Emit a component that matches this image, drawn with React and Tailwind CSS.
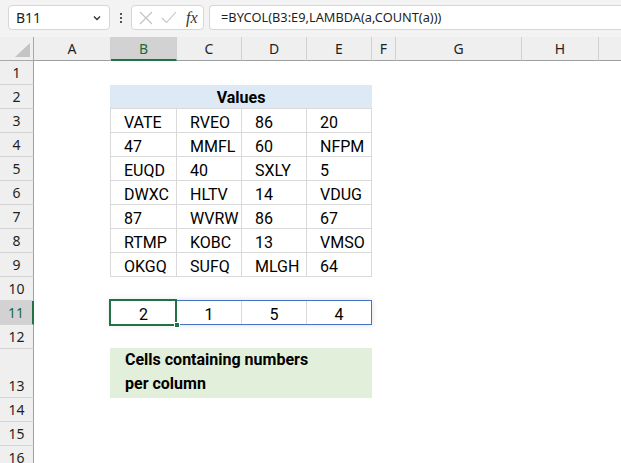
import React from 'react';

const colHeaders = [
  { label: 'A', w: 'w-[77px]' },
  { label: 'B', w: 'w-[66px]', selected: true },
  { label: 'C', w: 'w-[65px]' },
  { label: 'D', w: 'w-[65px]' },
  { label: 'E', w: 'w-[65px]' },
  { label: 'F', w: 'w-[24px]' },
  { label: 'G', w: 'w-[126px]' },
  { label: 'H', w: 'w-[77px]' },
  { label: '', w: 'w-[30px]' },
];

const rows = [
  ['VATE', 'RVEO', '86', '20'],
  ['47', 'MMFL', '60', 'NFPM'],
  ['EUQD', '40', 'SXLY', '5'],
  ['DWXC', 'HLTV', '14', 'VDUG'],
  ['87', 'WVRW', '86', '67'],
  ['RTMP', 'KOBC', '13', 'VMSO'],
  ['OKGQ', 'SUFQ', 'MLGH', '64'],
];

const cellW = ['w-[66px]', 'w-[65px]', 'w-[65px]', 'w-[65px]'];
const results = [2, 1, 5, 4];

function FormulaBar() {
  return (
    <div className="h-[37px] bg-[#f3f3f3] flex items-start pt-[5px] pl-[8px] shrink-0">
      {/* name box */}
      <div className="w-[102px] shrink-0 h-[25px] bg-white border border-[#d6d6d6] rounded-[4px] flex items-center pl-[7px] pr-[8px] text-[14px] text-[#1f1f1f]">
        <span className="flex-1">B11</span>
        <svg width="8" height="6" viewBox="0 0 8 6">
          <path d="M1 1.5 L4 4.5 L7 1.5" fill="none" stroke="#333" strokeWidth="1.4" />
        </svg>
      </div>
      {/* dots */}
      <div className="w-[21px] shrink-0 h-[25px] flex flex-col items-center justify-center gap-[2px]">
        <span className="w-[2px] h-[2px] bg-[#555]" />
        <span className="w-[2px] h-[2px] bg-[#555]" />
        <span className="w-[2px] h-[2px] bg-[#555]" />
      </div>
      {/* cancel / enter / fx */}
      <div className="w-[73px] shrink-0 h-[25px] bg-white border border-[#d6d6d6] rounded-[4px] flex items-center pl-[6px]">
        <svg width="14" height="14" viewBox="0 0 14 14" className="ml-[1px]">
          <path d="M1 1 L13 13 M13 1 L1 13" stroke="#c2c2c2" strokeWidth="1.1" />
        </svg>
        <svg width="16" height="13" viewBox="0 0 16 13" className="ml-[8px]">
          <path d="M1 7 L5.5 11.5 L15 1" fill="none" stroke="#c2c2c2" strokeWidth="1.1" />
        </svg>
        <span className="ml-[9px] italic text-[16px] leading-none text-[#333] font-['Liberation_Serif',serif]">fx</span>
      </div>
      {/* formula input */}
      <div className="ml-[5px] flex-1 h-[25px] bg-white border border-[#d6d6d6] border-r-0 rounded-l-[4px] flex items-center pl-[11px] text-[12.8px] text-[#1f1f1f]">
        =BYCOL(B3:E9,LAMBDA(a,COUNT(a)))
      </div>
    </div>
  );
}

function ColumnHeader() {
  return (
    <div className="flex h-[24px] bg-[#efefef] shrink-0">
      <div className="w-[34px] shrink-0 h-full border-r border-b border-[#a8a8a8] relative">
        <svg width="34" height="24" viewBox="0 0 34 24" className="absolute left-0 top-0">
          <polygon points="30,6 30,20 15,20" fill="#c4c4c4" />
        </svg>
      </div>
      {colHeaders.map((c, i) => (
        <div
          key={i}
          className={`${c.w} shrink-0 h-full flex items-center justify-center text-[14px] border-r border-r-[#d0d0d0] ${
            c.selected
              ? 'bg-[#d2d2d2] text-[#1d6b40] border-b-2 border-b-[#217346]'
              : 'text-[#1f1f1f] border-b border-b-[#a0a0a0]'
          }`}
        >
          {c.label}
        </div>
      ))}
    </div>
  );
}

function RowHeaders() {
  const nums = Array.from({ length: 16 }, (_, i) => i + 1);
  return (
    <div className="w-[34px] shrink-0 bg-[#efefef] flex flex-col">
      {nums.map((n) => (
        <div
          key={n}
          className={`w-[34px] shrink-0 flex items-center justify-center text-[14px] border-b border-b-[#d4d4d4] ${
            n === 13 ? 'h-[49px] pt-[24px]' : 'h-[24px]'
          } ${
            n === 11
              ? 'bg-[#d2d2d2] text-[#1d6b40] border-r-2 border-r-[#217346]'
              : 'text-[#1f1f1f] border-r border-r-[#a0a0a0]'
          }`}
        >
          {n}
        </div>
      ))}
    </div>
  );
}

function Sheet() {
  return (
    <div className="flex-1 grid grid-cols-[77px_66px_65px_65px_65px_24px_126px_77px] grid-rows-[repeat(12,24px)_49px_repeat(3,24px)] bg-white">
      {/* values table */}
      <div className="col-start-2 col-span-4 row-start-2 row-span-8 -ml-px w-[262px] flex flex-col font-['Roboto',sans-serif] text-[16px] text-black">
        <div className="h-[24px] bg-[#dde9f5] border-b border-[#d9d9d9] flex items-end justify-center leading-[19px] pb-[1px] font-bold">
          Values
        </div>
        {rows.map((r, ri) => (
          <div key={ri} className="h-[24px] flex border-l border-b border-[#d9d9d9]">
            {r.map((v, ci) => (
              <div
                key={ci}
                className={`${cellW[ci]} shrink-0 border-r border-[#d9d9d9] flex items-end pl-[13px] leading-[19px]`}
              >
                {v}
              </div>
            ))}
          </div>
        ))}
      </div>

      {/* result row */}
      <div className="col-start-2 col-span-4 row-start-11 -ml-px -mt-px w-[262px] h-[25px] relative border border-[#4472c4] bg-white shadow-[0_0_6px_rgba(0,0,0,0.14)] flex font-['Roboto',sans-serif] text-[16px] text-black">
        {results.map((v, i) => (
          <div
            key={i}
            className={`${i === 3 ? 'w-[64px]' : i === 0 ? 'w-[66px]' : 'w-[65px]'} shrink-0 flex items-end justify-center leading-[19px] ${
              i === 3 ? '' : 'border-r border-[#d9d9d9]'
            }`}
          >
            {v}
          </div>
        ))}
        <div className="absolute left-[-2px] top-[-2px] w-[68px] h-[27px] border-2 border-[#217346]" />
        <div className="absolute left-[63px] top-[21px] w-[6px] h-[6px] bg-[#217346] border border-white" />
      </div>

      {/* note */}
      <div className="col-start-2 col-span-4 row-start-13 -ml-px -mt-px w-[262px] h-[50px] bg-[#e2efda] pl-[15px] font-['Roboto',sans-serif] text-[16px] font-bold leading-[24px] text-black">
        Cells containing numbers
        <br />
        per column
      </div>
    </div>
  );
}

export default function App() {
  return (
    <div className="w-[621px] h-[463px] overflow-hidden bg-white flex flex-col font-['Noto_Sans',sans-serif]">
      <FormulaBar />
      <ColumnHeader />
      <div className="flex flex-1 overflow-hidden">
        <RowHeaders />
        <Sheet />
      </div>
    </div>
  );
}
